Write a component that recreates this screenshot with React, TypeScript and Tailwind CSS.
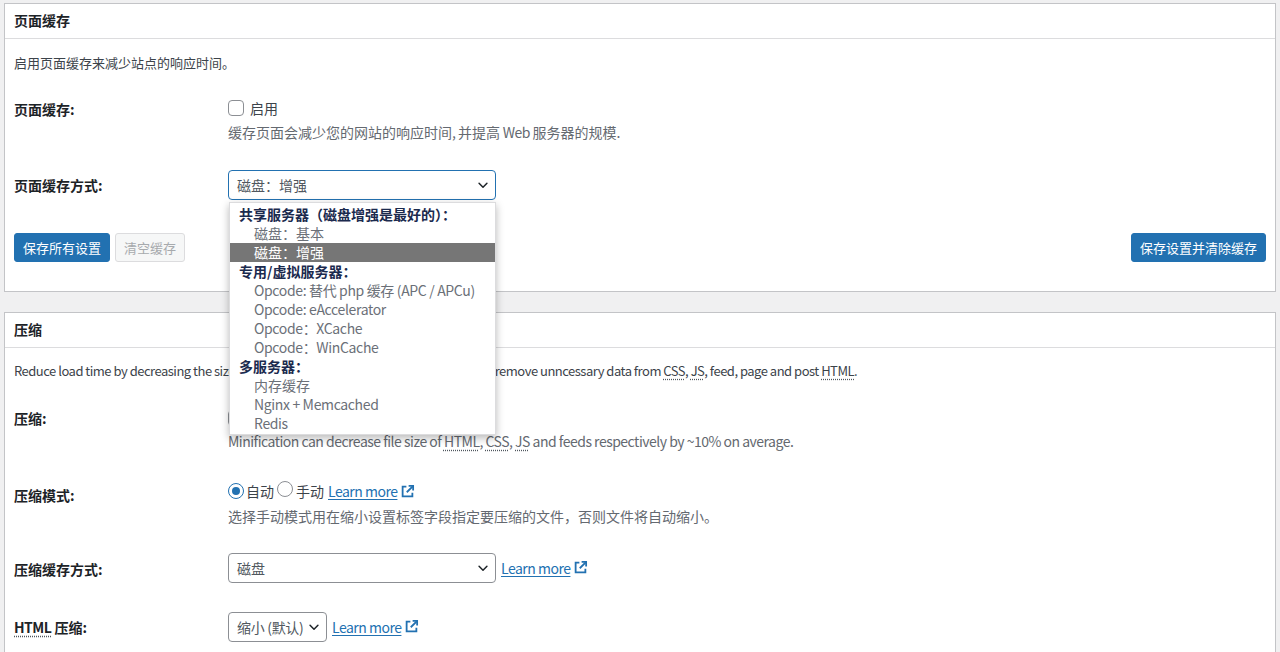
import React from "react";

const Chevron = () => (
  <svg width="14" height="14" viewBox="0 0 16 16" fill="none">
    <path d="M3.5 6l4.5 4.5L12.5 6" stroke="#1d2327" strokeWidth="1.7" strokeLinecap="round" strokeLinejoin="round" />
  </svg>
);

const ExtIcon = () => (
  <svg width="15" height="15" viewBox="0 0 20 20" fill="none" className="ml-[3px] shrink-0">
    <path d="M8.5 3.5H3.5v13h13v-5" stroke="#2271b1" strokeWidth="2.4" strokeLinejoin="miter" />
    <path d="M11.5 2.5h6v6" stroke="#2271b1" strokeWidth="2.4" />
    <path d="M17.3 2.7L9 11" stroke="#2271b1" strokeWidth="2.4" />
  </svg>
);

const LearnMore = () => (
  <a className="inline-flex items-center text-[#2271b1] leading-5">
    <span className="underline underline-offset-2 decoration-1 tracking-[-0.5px]">Learn more</span>
    <ExtIcon />
  </a>
);

const Abbr = ({ children }: { children: React.ReactNode }) => (
  <span className="underline decoration-dotted decoration-[#50575e] underline-offset-[3px]">{children}</span>
);

const L = ({ children }: { children: React.ReactNode }) => (
  <span className="tracking-[-0.5px]">{children}</span>
);

const Checkbox = () => (
  <span className="inline-block w-[16px] h-[16px] rounded-[4px] border border-[#8c8f94] bg-white shrink-0" />
);

const Radio = ({ checked }: { checked?: boolean }) => (
  <span
    className={
      checked
        ? "inline-flex items-center justify-center w-[16px] h-[16px] rounded-full border border-[#2271b1] bg-white shrink-0"
        : "inline-flex items-center justify-center w-[16px] h-[16px] rounded-full border border-[#8c8f94] bg-white shrink-0"
    }
  >
    {checked ? <span className="w-[8px] h-[8px] rounded-full bg-[#2271b1]" /> : null}
  </span>
);

const groupCls = "h-[19px] leading-[19px] pl-[9px] font-bold text-[#1b2a4e] whitespace-nowrap";
const optCls = "h-[19px] leading-[19px] pl-[24px] text-[#6b7078] whitespace-nowrap";
const optLatinCls = "h-[19px] leading-[19px] pl-[24px] text-[#6b7078] whitespace-nowrap tracking-[-0.35px]";
const selCls = "h-[19px] leading-[19px] pl-[24px] text-white bg-[#767676] whitespace-nowrap";

const btnPrimary =
  "h-[29px] px-[8px] rounded-[3px] bg-[#2271b1] border border-[#2271b1] text-white text-[13px] leading-none";
const btnDisabled =
  "h-[29px] px-[8px] rounded-[3px] bg-[#f6f7f7] border border-[#dcdcde] text-[#a7aaad] text-[13px] leading-none";

export default function App() {
  return (
    <div className="h-[652px] overflow-hidden bg-[#f0f0f1] pt-[3px] px-[4px] font-['Noto_Sans_CJK_SC',sans-serif] text-[14px] text-[#3c434a]">
      {/* Panel 1 */}
      <section className="border border-[#c3c4c7] bg-white">
        <div className="h-[35px] border-b border-[#dcdcde] flex items-center pl-[9px] pb-[1px] font-bold text-[#1d2327]">
          页面缓存
        </div>
        <div className="px-[9px] pb-[29px]">
          <p className="pt-[14px] text-[13px] leading-5">启用页面缓存来减少站点的响应时间。</p>

          <div className="flex items-start">
            <div className="w-[214px] pt-[26px] leading-5 font-bold text-[#1d2327]">页面缓存:</div>
            <div className="pt-[25px]">
              <div className="h-5 flex items-center">
                <Checkbox />
                <span className="ml-[6px] leading-5">启用</span>
              </div>
              <p className="mt-1 leading-5 text-[#646970]">
                缓存页面会减少您的网站的响应时间<L>, </L>并提高<L> Web </L>服务器的规模<L>.</L>
              </p>
            </div>
          </div>

          <div className="flex items-start">
            <div className="w-[214px] pt-[33px] leading-5 font-bold text-[#1d2327]">页面缓存方式:</div>
            <div className="pt-[28px]">
              <div className="relative w-[268px]">
                <div className="h-[30px] w-[268px] rounded-[4px] border border-[#2271b1] bg-white flex items-center justify-between pl-[8px] pr-[5px] text-[#50575e]">
                  <span>磁盘：增强</span>
                  <Chevron />
                </div>
                <div className="absolute z-20 left-[1px] top-[32px] w-[267px] h-[233px] bg-white border border-[#dcdcde] shadow-[0_3px_8px_rgba(0,0,0,0.28)] pt-[2px]">
                  <div className={groupCls}>共享服务器（磁盘增强是最好的）：</div>
                  <div className={optCls}>磁盘：基本</div>
                  <div className={selCls}>磁盘：增强</div>
                  <div className={groupCls}>专用/虚拟服务器：</div>
                  <div className={optLatinCls}>Opcode: 替代 php 缓存 (APC / APCu)</div>
                  <div className={optLatinCls}>Opcode: eAccelerator</div>
                  <div className={optLatinCls}>Opcode：XCache</div>
                  <div className={optLatinCls}>Opcode：WinCache</div>
                  <div className={groupCls}>多服务器：</div>
                  <div className={optCls}>内存缓存</div>
                  <div className={optLatinCls}>Nginx + Memcached</div>
                  <div className={optLatinCls}>Redis</div>
                </div>
              </div>
            </div>
          </div>

          <div className="mt-[33px] flex items-center justify-between">
            <div className="flex items-center gap-[5px]">
              <button className={btnPrimary}>保存所有设置</button>
              <button className={btnDisabled}>清空缓存</button>
            </div>
            <button className={btnPrimary}>保存设置并清除缓存</button>
          </div>
        </div>
      </section>

      {/* Panel 2 */}
      <section className="mt-[20px] border border-[#c3c4c7] bg-white">
        <div className="h-[35px] border-b border-[#dcdcde] flex items-center pl-[9px] pb-[1px] font-bold text-[#1d2327]">
          压缩
        </div>
        <div className="px-[9px] pb-[40px]">
          <p className="pt-[13px] text-[13px] leading-5 whitespace-nowrap tracking-[-0.5px]">
            Reduce load time by decreasing the size and number of <Abbr>CSS</Abbr> and <Abbr>JS</Abbr> files. Automatically remove unncessary data from <Abbr>CSS</Abbr>, <Abbr>JS</Abbr>, feed, page and post <Abbr>HTML</Abbr>.
          </p>

          <div className="flex items-start">
            <div className="w-[214px] pt-[27px] leading-5 font-bold text-[#1d2327]">压缩:</div>
            <div className="pt-[27px]">
              <div className="h-5 flex items-center">
                <Checkbox />
                <span className="ml-[6px] leading-5">启用</span>
              </div>
              <p className="mt-[3px] leading-5 text-[#646970] tracking-[-0.5px]">
                Minification can decrease file size of <Abbr>HTML</Abbr>, <Abbr>CSS</Abbr>, <Abbr>JS</Abbr> and feeds respectively by ~10% on average.
              </p>
            </div>
          </div>

          <div className="flex items-start">
            <div className="w-[214px] pt-[34px] leading-5 font-bold text-[#1d2327]">压缩模式:</div>
            <div className="pt-[30px]">
              <div className="h-5 flex items-center">
                <Radio checked />
                <span className="ml-[2px] leading-5">自动</span>
                <span className="ml-[3px]"><Radio /></span>
                <span className="ml-[3px] leading-5 mr-[4px]">手动</span>
                <LearnMore />
              </div>
              <p className="mt-[5px] leading-5 text-[#646970]">
                选择手动模式用在缩小设置标签字段指定要压缩的文件，否则文件将自动缩小。
              </p>
            </div>
          </div>

          <div className="flex items-start">
            <div className="w-[214px] pt-[33px] leading-5 font-bold text-[#1d2327]">压缩缓存方式:</div>
            <div className="pt-[27px] flex items-center">
              <div className="h-[30px] w-[268px] rounded-[4px] border border-[#8c8f94] bg-white flex items-center justify-between pl-[8px] pr-[5px] text-[#50575e]">
                <span>磁盘</span>
                <Chevron />
              </div>
              <span className="ml-[5px]"><LearnMore /></span>
            </div>
          </div>

          <div className="flex items-start">
            <div className="w-[214px] pt-[34px] leading-5 font-bold text-[#1d2327]">
              <span className="tracking-[-0.5px]"><Abbr>HTML</Abbr></span> 压缩:
            </div>
            <div className="pt-[29px] flex items-center">
              <div className="h-[30px] w-[99px] rounded-[4px] border border-[#8c8f94] bg-white flex items-center justify-between pl-[8px] pr-[5px] text-[#50575e]">
                <span className="tracking-[-0.3px]">缩小 (默认)</span>
                <Chevron />
              </div>
              <span className="ml-[5px]"><LearnMore /></span>
            </div>
          </div>
        </div>
      </section>
    </div>
  );
}
